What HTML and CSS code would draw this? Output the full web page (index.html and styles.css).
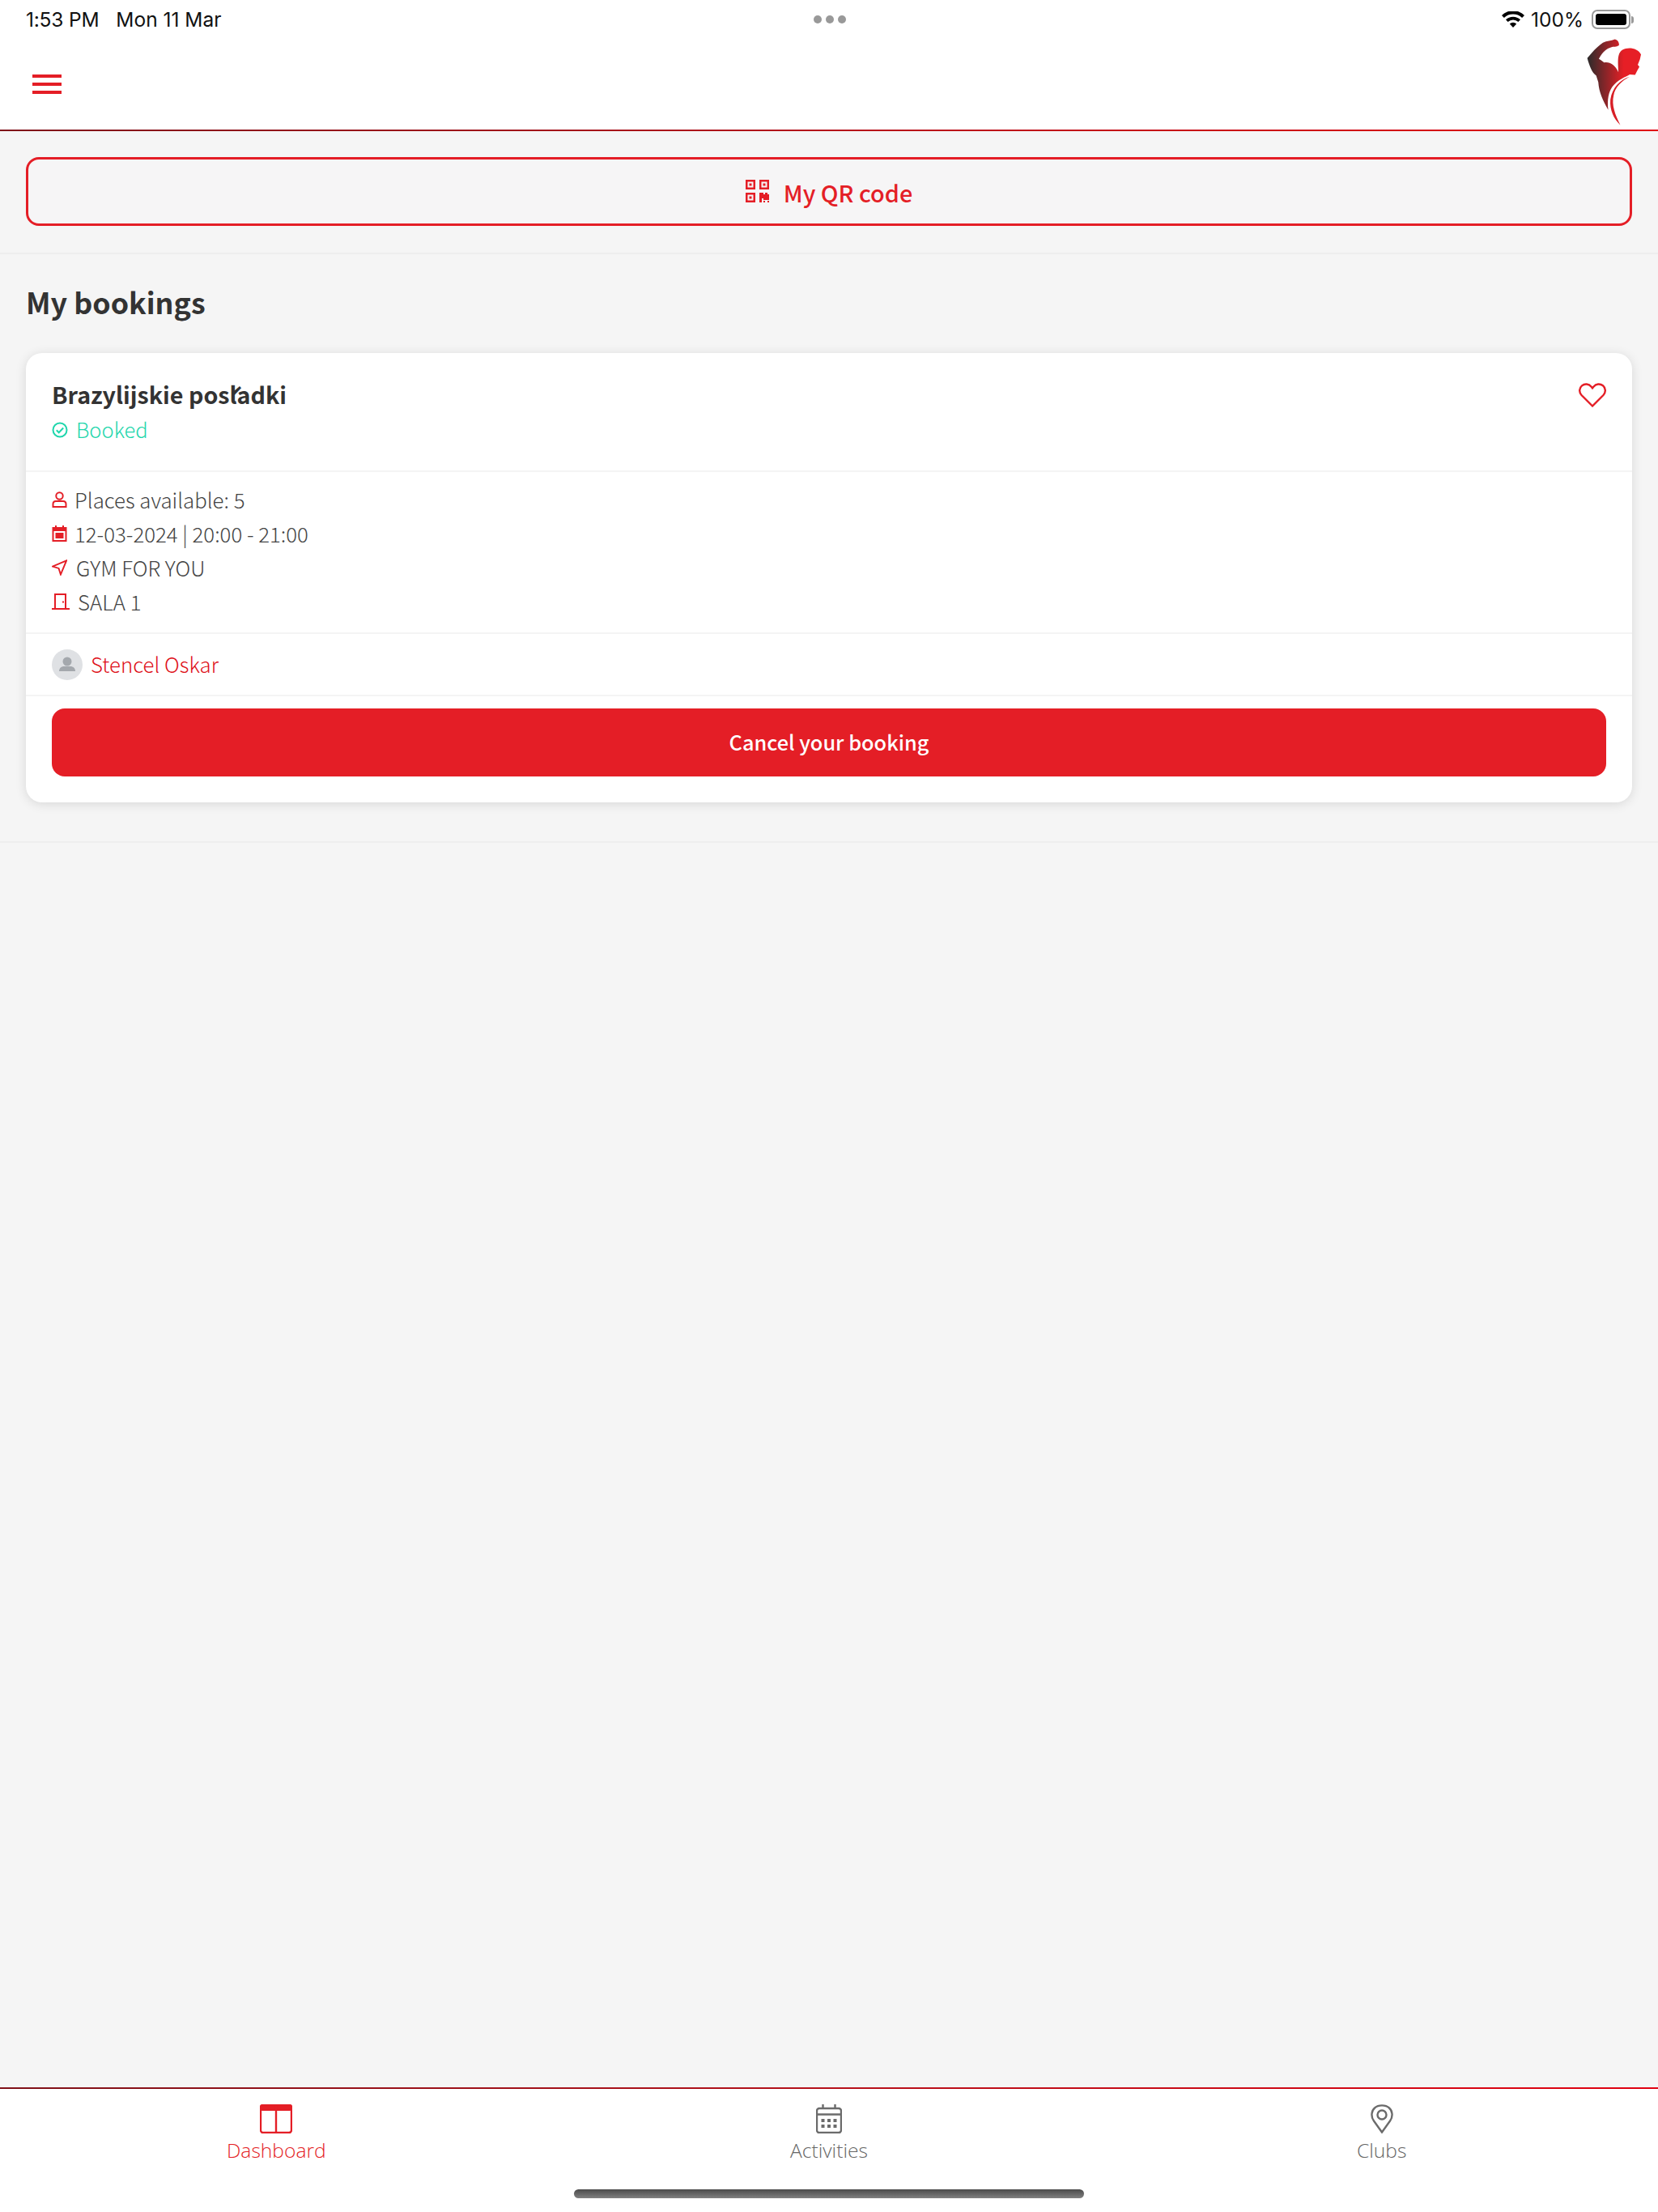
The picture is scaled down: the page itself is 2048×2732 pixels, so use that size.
FILE: index.html
```html
<!DOCTYPE html>
<html lang="en">
<head>
  <meta charset="UTF-8">
  <meta name="viewport" content="width=device-width, initial-scale=1.0">
  <title>My bookings</title>
  <link rel="stylesheet" href="styles.css">
</head>
<body>

<div class="app">
  <!-- Status bar -->
  <div class="status-bar">
    <div class="status-left">
      <span class="status-time">1:53 PM</span>
      <span>Mon 11 Mar</span>
    </div>
    <div class="status-dots"><i></i><i></i><i></i></div>
    <div class="status-right">
      <svg class="wifi" viewBox="0 0 28 20">
        <path d="M14 20l-4.2-4.6a6 6 0 0 1 8.4 0z"/>
        <path d="M7.6 13.1L5 10.3a13 13 0 0 1 18 0l-2.600 2.800a9.200 9.200 0 0 0-12.800 0z"/>
        <path d="M2.900 8L0 5a20 20 0 0 1 28 0l-2.900 3a16 16 0 0 0-22.200 0z"/>
      </svg>
      <span>100%</span>
      <div class="battery"><div class="battery-fill"></div></div>
      <div class="battery-nub"></div>
    </div>
  </div>

  <!-- Header -->
  <header class="header">
    <div class="hamburger"><span></span><span></span><span></span></div>
    <svg class="logo" viewBox="90 55 205 320">
      <defs>
        <linearGradient id="logoGrad" x1="0" y1="0" x2="1" y2="0">
          <stop offset="0" stop-color="#2b2b2b"/>
          <stop offset="0.68" stop-color="#e61f26"/>
        </linearGradient>
      </defs>
      <path fill="url(#logoGrad)" d="M92 125C110 105 125 85 150 68C165 60 180 62 195 55C205 57 212 68 210 78C200 85 190 82 180 85C165 90 150 100 135 128C142 132 150 138 155 142C175 138 195 150 208 178C208 150 200 110 222 95C245 83 280 88 292 112L288 130L280 150L286 158L278 172L270 188L250 186C235 195 205 205 185 232C172 250 165 280 170 318C150 285 135 250 133 215L125 190C110 180 100 155 92 125Z"/>
      <path fill="#d81f26" d="M250 195C215 205 185 235 178 280C175 320 190 350 215 375C195 335 182 300 190 265C195 235 220 210 250 195Z"/>
    </svg>
  </header>
  <div class="red-line"></div>

  <main class="content">
    <section class="qr-section">
      <button class="qr-button">
        <svg class="qr-icon" viewBox="0 0 29 28">
          <path fill-rule="evenodd" d="M0 0h12v12H0zM2.500 2.500v7h7v-7zM4.500 4.500h3v3h-3zM17 0h12v12H17zM19.500 2.500v7h7v-7zM21.500 4.500h3v3h-3zM0 16h12v12H0zM2.500 18.500v7h7v-7zM4.500 20.500h3v3h-3z"/>
          <path d="M17 16h5v2h2v-2h3v2h2v7h-7v-2h-2v5h-3zM22 26h2v2h-2zM27 26h2v2h-2z"/>
        </svg>
        My QR code
      </button>
    </section>

    <section class="bookings">
      <h1 class="page-title">My bookings</h1>

      <div class="card">
        <div class="card-head">
          <div>
            <div class="card-title">Brazylijskie pośladki</div>
            <div class="card-status">
              <svg class="status-icon" viewBox="0 0 20 20">
                <circle cx="10" cy="10" r="8.500"/>
                <path d="M5.800 10.300l2.900 2.900 5.500-5.700"/>
              </svg>
              Booked
            </div>
          </div>
          <svg class="heart" viewBox="0 0 34 30">
            <path d="M17 28.500L3.500 15C0.200 11.500 0.500 6.200 4 3.300C7.500 0.500 12.500 1 15.500 4.500L17 6.300L18.500 4.500C21.500 1 26.500 0.500 30 3.300C33.500 6.200 33.800 11.500 30.500 15z"/>
          </svg>
        </div>

        <div class="card-info">
          <div class="info-row">
            <svg class="info-icon" viewBox="0 0 18 20">
              <circle cx="9" cy="5.500" r="4.200"/>
              <path d="M1 19v-3.500c0-2 1.500-3.500 3.500-3.500h9c2 0 3.500 1.500 3.500 3.500V19z"/>
            </svg>
            <span>Places available: 5</span>
          </div>
          <div class="info-row">
            <svg class="info-icon" viewBox="0 0 18 20">
              <rect x="1" y="3" width="16" height="16"/>
              <path d="M4.500 0v4M13.500 0v4"/>
              <path class="solid" d="M1 3h16v4H1zM4 9h10v7H4z"/>
            </svg>
            <span>12-03-2024 | 20:00 - 21:00</span>
          </div>
          <div class="info-row">
            <svg class="info-icon" viewBox="0 0 20 20">
              <path d="M19 1L1 8.500l8 2.500 2.500 8z"/>
            </svg>
            <span class="nudge-a">GYM FOR YOU</span>
          </div>
          <div class="info-row">
            <svg class="info-icon door" viewBox="0 0 22 20">
              <path d="M0 19h22M4 19V1h13v18"/>
              <path class="solid" d="M13 9.500h2v2h-2z"/>
            </svg>
            <span class="nudge-b">SALA 1</span>
          </div>
        </div>

        <div class="card-trainer">
          <div class="avatar">
            <svg viewBox="0 0 38 38">
              <circle cx="19" cy="15" r="5.500"/>
              <path d="M9 27c0-4 3-6 6-6h8c3 0 6 2 6 6z"/>
            </svg>
          </div>
          <span class="trainer-name">Stencel Oskar</span>
        </div>

        <div class="card-action">
          <button class="cancel-button">Cancel your booking</button>
        </div>
      </div>
    </section>
  </main>

  <div class="red-line"></div>

  <!-- Bottom tabs -->
  <nav class="tabs">
    <div class="tab active">
      <svg class="tab-icon" width="40" height="36" viewBox="0 0 40 36">
        <rect class="solid" x="0" y="0" width="40" height="8" rx="3"/>
        <rect x="1" y="1" width="38" height="34" rx="3"/>
        <path d="M20 2v33"/>
      </svg>
      <span>Dashboard</span>
    </div>
    <div class="tab">
      <svg class="tab-icon" width="32" height="36" viewBox="0 0 32 36">
        <rect x="1" y="5" width="30" height="30" rx="3"/>
        <path d="M1 12.500h30M8.500 0v6M23.500 0v6"/>
        <path class="solid" d="M6.500 18h4v4h-4zM14 18h4v4h-4zM21.500 18h4v4h-4zM6.500 25h4v4h-4zM14 25h4v4h-4zM21.500 25h4v4h-4z"/>
      </svg>
      <span>Activities</span>
    </div>
    <div class="tab">
      <svg class="tab-icon" width="28" height="36" viewBox="0 0 28 36">
        <path d="M14 34.500L4 20.500C0 15 1 8 5 4.500C9.500 0.300 18.500 0.300 23 4.500C27 8 28 15 24 20.500z"/>
        <circle cx="14" cy="13" r="5.500"/>
      </svg>
      <span>Clubs</span>
    </div>
  </nav>

  <div class="home-bar"><div class="home-indicator"></div></div>
</div>

</body>
</html>
```

FILE: styles.css
```css
* {
  box-sizing: border-box;
}
body {
  margin: 0;
  background: #fff;
  font-family: "Noto Sans CJK SC", "Noto Sans", sans-serif;
  color: #555;
}
.app {
  display: flex;
  flex-direction: column;
  height: 2732px;
}

/* status bar */
.status-bar {
  display: grid;
  grid-template-columns: 1fr auto 1fr;
  align-items: center;
  height: 46px;
  padding: 2px 30px 0 32px;
  font-family: Inter, sans-serif;
  font-size: 24.500px;
  color: #111;
  background: #fff;
}
.status-left {
  display: flex;
  gap: 21px;
}
.status-time {
  letter-spacing: -0.2px;
}
.status-dots {
  display: flex;
  gap: 5px;
}
.status-dots i {
  width: 10px;
  height: 10px;
  border-radius: 50%;
  background: #999;
}
.status-right {
  display: flex;
  align-items: center;
  justify-content: flex-end;
}
.wifi {
  width: 28px;
  height: 20px;
  margin-right: 8px;
  fill: #000;
}
.battery {
  width: 48px;
  height: 24px;
  margin-left: 10px;
  padding: 3px;
  border: 2px solid #999;
  border-radius: 7px;
}
.battery-fill {
  height: 100%;
  background: #000;
  border-radius: 3px;
}
.battery-nub {
  width: 3px;
  height: 9px;
  margin-left: 1px;
  background: #999;
  border-radius: 0 3px 3px 0;
}

/* header */
.header {
  display: flex;
  justify-content: space-between;
  align-items: flex-start;
  height: 114px;
  padding: 2px 20px 0 40px;
  background: #fff;
}
.hamburger {
  display: flex;
  flex-direction: column;
  gap: 6px;
  margin-top: 44px;
}
.hamburger span {
  display: block;
  width: 36px;
  height: 4px;
  background: #e41e26;
}
.logo {
  width: 68px;
  height: 107px;
}
.red-line {
  height: 2px;
  flex: none;
  background: linear-gradient(90deg, #7f1018, #b5101a 50%, #e00010);
}

/* content */
.content {
  flex: 1;
  background: #f5f5f5;
}
.qr-section {
  padding: 32px 32px 33px;
  border-bottom: 2px solid #eee;
}
.qr-button {
  display: flex;
  align-items: center;
  justify-content: center;
  gap: 18px;
  width: 100%;
  height: 85px;
  padding: 2px 0 0;
  font-family: inherit;
  font-size: 28.800px;
  font-weight: 500;
  color: #e41e26;
  background: #f6f5f6;
  border: 3px solid #e41e26;
  border-radius: 16px;
}
.qr-icon {
  width: 29px;
  height: 28px;
  margin-top: -3px;
  fill: #e41e26;
}
.bookings {
  padding: 33px 32px 48px;
  border-bottom: 2px solid #eee;
}
.page-title {
  margin: 0 0 39px;
  font-size: 35.800px;
  line-height: 50px;
  font-weight: 700;
  color: #333;
}

/* card */
.card {
  background: #fff;
  border-radius: 20px;
  box-shadow: 0 2px 14px rgba(0,0,0,0.12);
}
.card-head {
  display: flex;
  justify-content: space-between;
  align-items: flex-start;
  height: 147px;
  padding: 29px 32px 0;
  border-bottom: 2px solid #f4f4f4;
}
.card-title {
  font-size: 28.700px;
  line-height: 44px;
  font-weight: 700;
  color: #333;
}
.card-status {
  display: flex;
  align-items: center;
  gap: 10px;
  font-size: 25.500px;
  line-height: 42px;
  font-weight: 300;
  color: #1fd6ac;
}
.status-icon {
  width: 20px;
  height: 20px;
  margin-top: 2px;
  fill: none;
  stroke: #1fd6ac;
  stroke-width: 2;
}
.heart {
  width: 34px;
  height: 30px;
  margin: 8px 0 0;
  fill: none;
  stroke: #e41e26;
  stroke-width: 2.400;
}
.card-info {
  padding: 12px 32px 18px;
  border-bottom: 2px solid #f4f4f4;
}
.info-row {
  display: flex;
  align-items: center;
  gap: 9px;
  height: 42px;
  font-size: 25.800px;
  font-weight: 300;
  color: #444;
}
.info-icon {
  width: 19px;
  height: 20px;
  margin-top: 2px;
  flex: none;
  fill: none;
  stroke: #e41e26;
  stroke-width: 2;
}
.info-icon.door {
  width: 22px;
}
.solid {
  fill: #e41e26;
  stroke: none;
}
.nudge-a {
  margin-left: 2px;
}
.nudge-b {
  margin-left: 1px;
}
.card-trainer {
  display: flex;
  align-items: center;
  gap: 10px;
  height: 77px;
  padding: 0 32px;
  border-bottom: 2px solid #f4f4f4;
}
.avatar {
  width: 38px;
  height: 38px;
  border-radius: 50%;
  background: #dfe1e4;
}
.avatar svg {
  display: block;
  fill: #a4a8ad;
}
.trainer-name {
  padding-bottom: 2px;
  font-size: 25.800px;
  font-weight: 300;
  color: #de0f18;
}
.card-action {
  padding: 15px 32px 32px;
}
.cancel-button {
  display: block;
  width: 100%;
  height: 84px;
  padding: 0 0 3px;
  font-family: inherit;
  font-size: 25.300px;
  font-weight: 500;
  color: #fff;
  background: #e41e26;
  border: none;
  border-radius: 16px;
}

/* tabs */
.tabs {
  display: grid;
  grid-template-columns: repeat(3, 1fr);
  height: 124px;
  padding-top: 19px;
  background: #fff;
}
.tab {
  display: flex;
  flex-direction: column;
  align-items: center;
  font-family: "Open Sans", sans-serif;
  font-size: 24.600px;
  font-weight: 300;
  line-height: 32px;
  color: #666;
}
.tab-icon {
  margin-bottom: 5px;
  fill: none;
  stroke: #6b6b6b;
  stroke-width: 2.400;
}
.tab-icon .solid {
  fill: #6b6b6b;
}
.tab.active {
  color: #e41e26;
}
.tab.active .tab-icon {
  stroke: #e41e26;
}
.tab.active .tab-icon .solid {
  fill: #e41e26;
  stroke: none;
}
.home-bar {
  height: 28px;
  background: #fff;
}
.home-indicator {
  width: 630px;
  height: 11px;
  margin: 0 auto;
  border-radius: 6px;
  background: linear-gradient(180deg, #4a4a4a, #808080);
}
```
